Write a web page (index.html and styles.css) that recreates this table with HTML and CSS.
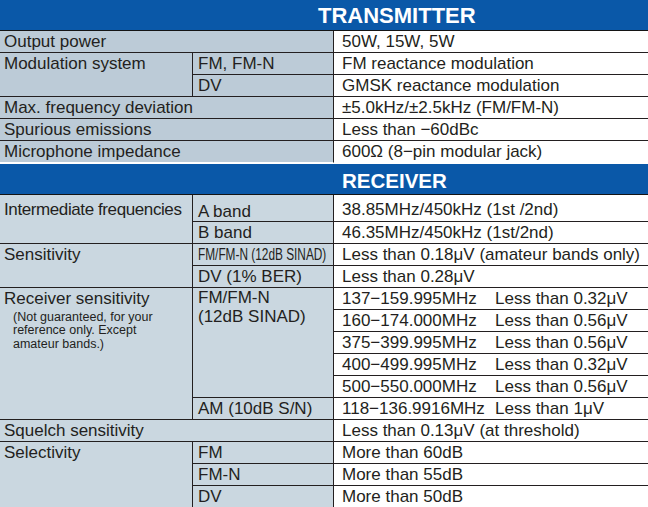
FILE: index.html
```html
<!DOCTYPE html>
<html lang="en">
<head>
<meta charset="utf-8">
<title>Specifications</title>
<link rel="stylesheet" href="styles.css">
</head>
<body>
<div class="spec">
  <div class="hdr hdr-tx">TRANSMITTER</div>
  <div class="grid grid-tx">
    <div class="c k wide">Output power</div>
    <div class="c v">50W, 15W, 5W</div>

    <div class="c k r2">Modulation system</div>
    <div class="c m">FM, FM-N</div>
    <div class="c v">FM reactance modulation</div>
    <div class="c m">DV</div>
    <div class="c v">GMSK reactance modulation</div>

    <div class="c k wide">Max. frequency deviation</div>
    <div class="c v">±5.0kHz/±2.5kHz (FM/FM-N)</div>

    <div class="c k wide">Spurious emissions</div>
    <div class="c v">Less than &minus;60dBc</div>

    <div class="c k wide last">Microphone impedance</div>
    <div class="c v last">600Ω (8&minus;pin modular jack)</div>
  </div>

  <div class="hdr hdr-rx">RECEIVER</div>
  <div class="grid grid-rx">
    <div class="c k r2 pt tight">Intermediate frequencies</div>
    <div class="c m aband">A band</div>
    <div class="c v pt">38.85MHz/450kHz (1st /2nd)</div>
    <div class="c m">B band</div>
    <div class="c v">46.35MHz/450kHz (1st/2nd)</div>

    <div class="c k r2">Sensitivity</div>
    <div class="c m"><span class="cond">FM/FM-N (12dB SINAD)</span></div>
    <div class="c v">Less than 0.18μV (amateur bands only)</div>
    <div class="c m">DV (1% BER)</div>
    <div class="c v">Less than 0.28μV</div>

    <div class="c k r6">Receiver sensitivity
      <div class="note">(Not guaranteed, for your<br>reference only. Except<br>amateur bands.)</div>
    </div>
    <div class="c m r5 two">FM/FM-N<br>(12dB SINAD)</div>
    <div class="c v split"><span class="rng">137&minus;159.995MHz</span><span>Less than 0.32μV</span></div>
    <div class="c v split"><span class="rng">160&minus;174.000MHz</span><span>Less than 0.56μV</span></div>
    <div class="c v split"><span class="rng">375&minus;399.995MHz</span><span>Less than 0.56μV</span></div>
    <div class="c v split"><span class="rng">400&minus;499.995MHz</span><span>Less than 0.32μV</span></div>
    <div class="c v split"><span class="rng">500&minus;550.000MHz</span><span>Less than 0.56μV</span></div>
    <div class="c m">AM (10dB S/N)</div>
    <div class="c v split"><span class="rng">118&minus;136.9916MHz</span><span>Less than 1μV</span></div>

    <div class="c k wide">Squelch sensitivity</div>
    <div class="c v">Less than 0.13μV (at threshold)</div>

    <div class="c k r3">Selectivity</div>
    <div class="c m">FM</div>
    <div class="c v">More than 60dB</div>
    <div class="c m">FM-N</div>
    <div class="c v">More than 55dB</div>
    <div class="c m">DV</div>
    <div class="c v">More than 50dB</div>
  </div>
</div>
</body>
</html>
```

FILE: styles.css
```css
* {
  box-sizing: border-box;
  margin: 0;
  padding: 0;
}

html,
body {
  background: #ffffff;
}

body {
  width: 648px;
  height: 507px;
  overflow: hidden;
  font-family: "Liberation Sans", Arial, sans-serif;
  color: #231f20;
}

.hdr {
  height: 31px;
  background: #0a58a8;
  color: #ffffff;
  font-weight: bold;
  white-space: nowrap;
  border-bottom: 1px solid #141414;
}

.hdr-tx {
  font-size: 22px;
  line-height: 28px;
  padding: 2px 0 0 318px;
}

.hdr-rx {
  margin-top: 1px;
  font-size: 20.5px;
  line-height: 26px;
  padding: 4px 0 0 342px;
}

.grid {
  display: grid;
  grid-template-columns: 193px 141px 1fr;
  grid-auto-rows: 22px;
  font-size: 17px;
  line-height: 21px;
}

.grid-rx {
  grid-template-rows: 27px;
}

.c {
  white-space: nowrap;
  border-bottom: 1px solid #231f20;
}

.k {
  grid-column: 1;
  padding-left: 4px;
  border-right: 1px solid #231f20;
}

.k.wide {
  grid-column: 1 / span 2;
}

.m {
  grid-column: 2;
  padding-left: 5px;
  border-right: 1px solid #231f20;
}

.v {
  grid-column: 3;
  padding-left: 8px;
  background: #ffffff;
}

.grid-tx .k,
.grid-tx .m {
  background: #bccbd7;
}

.grid-rx .k,
.grid-rx .m {
  background: #cad7e0;
}

.r2 { grid-row: span 2; }
.r3 { grid-row: span 3; }
.r5 { grid-row: span 5; }
.r6 { grid-row: span 6; }

.last {
  border-bottom-color: #ffffff;
}

.pt {
  padding-top: 4px;
}

.tight {
  letter-spacing: -0.4px;
}

.aband {
  padding-top: 8px;
  line-height: 18px;
}

.cond {
  display: inline-block;
  font-size: 16px;
  transform: scaleX(0.74);
  transform-origin: 0 50%;
}

.two {
  line-height: 19px;
}

.note {
  margin-top: 2px;
  padding-left: 9px;
  font-size: 12.5px;
  line-height: 13.3px;
}

.split {
  display: flex;
}

.rng {
  width: 153px;
  flex: none;
}
```
